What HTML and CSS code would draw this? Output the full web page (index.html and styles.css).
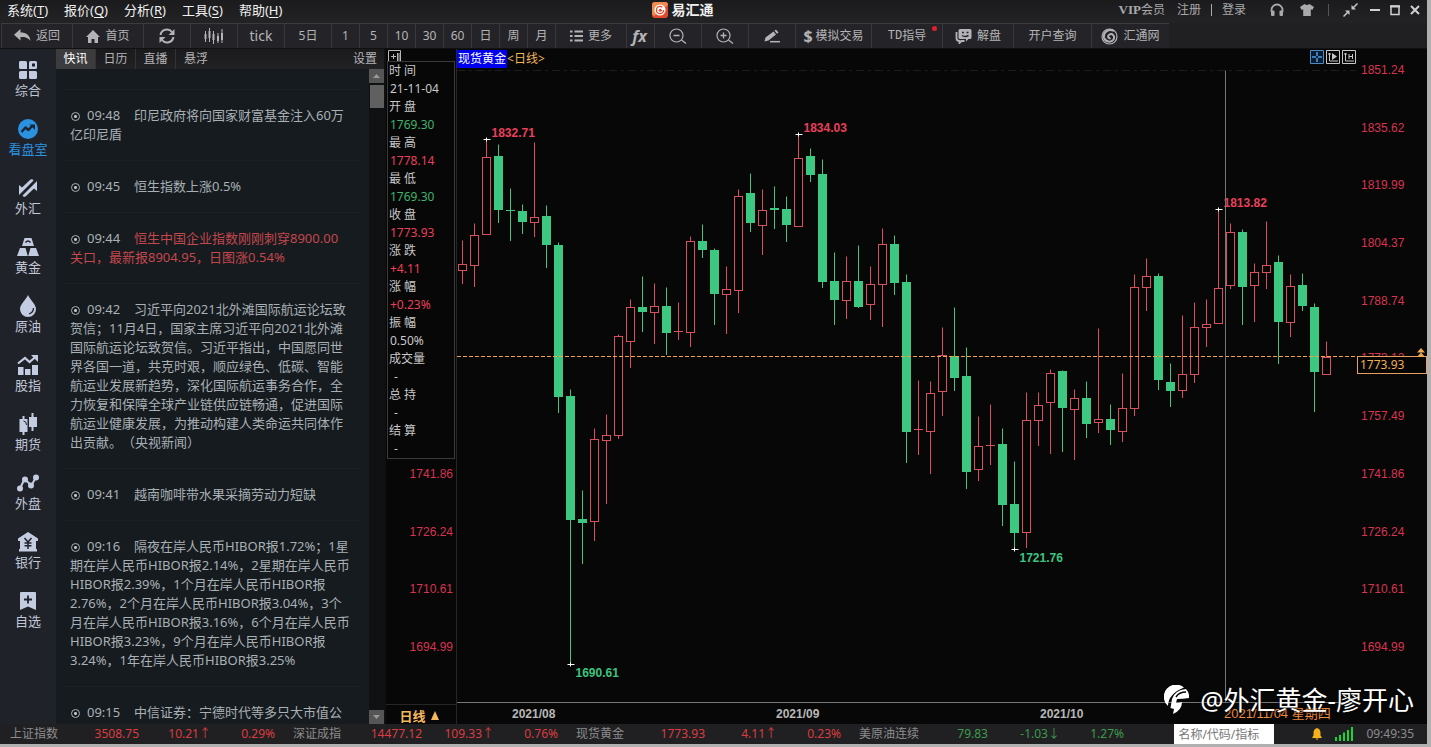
FILE: index.html
```
<!DOCTYPE html>
<html lang="zh-CN">
<head>
    <meta charset="UTF-8">
    <title>易汇通</title>
    <link rel="stylesheet" href="styles.css">
</head>
<body>
<div id="app">
    <header class="titlebar">
        <nav class="menu">
            <button>系统(<u>T</u>)</button>
            <button>报价(<u>Q</u>)</button>
            <button>分析(<u>R</u>)</button>
            <button>工具(<u>S</u>)</button>
            <button>帮助(<u>H</u>)</button>
        </nav>
        <h1 class="brand">
            <svg width="16" height="16" viewBox="0 0 16 16"><rect width="16" height="16" rx="3" fill="#e2492f"/><path d="M0 3a3 3 0 0 1 3-3h10a3 3 0 0 1 3 3L2 14a3 3 0 0 1-2-3z" fill="#f08a50"/><circle cx="8" cy="8" r="5.6" fill="#fff"/><circle cx="8" cy="8" r="3.600" fill="none" stroke="#e2492f" stroke-width="1.300" stroke-dasharray="19 3.600"/><circle cx="8.300" cy="8.300" r="1.500" fill="#e2492f"/></svg>
            易汇通
        </h1>
        <div class="user">
            <a href="#" class="vip"><b>VIP</b>会员</a>
            <a href="#">注册</a>
            <span class="bar"></span>
            <a href="#">登录</a>
            <button class="ico headset" aria-label="客服"><svg width="14" height="14" viewBox="0 0 14 14"><path d="M1.500 9V7a5.500 5.500 0 0 1 11 0v2" fill="none" stroke="#a9a9ab" stroke-width="1.800"/><rect x="1" y="7.500" width="3.500" height="5.500" rx="1" fill="#a9a9ab"/><rect x="9.500" y="7.500" width="3.500" height="5.500" rx="1" fill="#a9a9ab"/></svg></button>
            <button class="ico shirt" aria-label="换肤"><svg width="14" height="14" viewBox="0 0 14 14"><path d="M4.500 1Q7 3 9.500 1L14 4 12.300 7 10.800 6.300V13H3.200V6.300L1.700 7 0 4z" fill="#a9a9ab"/></svg></button>
            <span class="bar thin"></span>
            <button class="ico shrink" aria-label="精简"><svg width="15" height="14" viewBox="0 0 15 14"><path d="M14.500 0.500 10 5M0.500 13.500 5 9" stroke="#c4c4c4" stroke-width="1.500"/><path d="M8.500 2v4.500H13zM6.500 12V7.500H2z" fill="#c4c4c4"/></svg></button>
            <button class="ico" aria-label="最小化"><svg width="10" height="12" viewBox="0 0 10 12"><path d="M0 6h10" stroke="#d0d0d0" stroke-width="2"/></svg></button>
            <button class="ico" aria-label="最大化"><svg width="10" height="12" viewBox="0 0 10 12"><path d="M1 2v8.500h8V2z" fill="none" stroke="#d0d0d0" stroke-width="1.500"/><path d="M0 2.500h10" stroke="#d0d0d0" stroke-width="2"/></svg></button>
            <button class="ico" aria-label="关闭"><svg width="10" height="12" viewBox="0 0 10 12"><path d="M1 2l8 8M9 2l-8 8" stroke="#d0d0d0" stroke-width="2"/></svg></button>
        </div>
    </header>

    <div class="toolbar">
        <button class="w71"><svg width="17" height="14" viewBox="0 0 17 14"><path d="M6.500 0v3.500C12 3.500 16 6 16.500 12 14 8.500 11 8 6.500 8v3.500L0 5.800z" fill="#b4b4b6"/></svg>返回</button>
        <button class="w71"><svg width="14" height="13" viewBox="0 0 14 13"><path d="M7 0 14 7h-2v6H8.500V9h-3v4H2V7H0z" fill="#b4b4b6"/></svg>首页</button>
        <button class="w47" aria-label="刷新"><svg width="18" height="16" viewBox="0 0 18 16"><path d="M2.500 7A6.500 6.500 0 0 1 14 4M15.500 9A6.500 6.500 0 0 1 4 12" fill="none" stroke="#b4b4b6" stroke-width="2"/><path d="M16.500 1v6h-6zM1.500 15V9h6z" fill="#b4b4b6"/></svg></button>
        <button class="w47" aria-label="K线"><svg width="20" height="16" viewBox="0 0 20 16"><path d="M1.500 3v11M5.500 0v14M9.500 3v13M14 5v10M18 1v14" stroke="#b4b4b6"/><path d="M0.500 6h2v5h-2zM4.500 3h2v7h-2zM8.500 6h2v6h-2zM13 8h2v5h-2zM17 5h2v7h-2z" fill="#b4b4b6"/></svg></button>
        <button class="w47 tick">tick</button>
        <button class="w47">5日</button>
        <button class="w28">1</button>
        <button class="w28">5</button>
        <button class="w28">10</button>
        <button class="w28">30</button>
        <button class="w28">60</button>
        <button class="w28">日</button>
        <button class="w28">周</button>
        <button class="w28">月</button>
        <button class="w71"><svg width="13" height="12" viewBox="0 0 13 12"><path d="M0 1.500h2.500M0 6h2.500M0 10.500h2.500M4.500 1.500H13M4.500 6H13M4.500 10.500H13" stroke="#b4b4b6" stroke-width="2"/></svg>更多</button>
        <button class="w28 fx">fx</button>
        <button class="w47" aria-label="缩小"><svg width="18" height="16" viewBox="0 0 18 16"><circle cx="7.500" cy="7.500" r="6.500" fill="none" stroke="#b4b4b6" stroke-width="1.200"/><path d="M4.500 7.500h6M12.500 12l4.500 3.500" stroke="#b4b4b6" stroke-width="1.300"/></svg></button>
        <button class="w47" aria-label="放大"><svg width="18" height="16" viewBox="0 0 18 16"><circle cx="7.500" cy="7.500" r="6.500" fill="none" stroke="#b4b4b6" stroke-width="1.200"/><path d="M4.500 7.500h6M7.500 4.500v6M12.500 12l4.500 3.500" stroke="#b4b4b6" stroke-width="1.300"/></svg></button>
        <button class="w47" aria-label="画线"><svg width="16" height="14" viewBox="0 0 16 14"><path d="M0.500 12.500 1.500 8.500 9.500 2.500 12 5.500 4.500 11.500zM10.500 1.700 12 .5 14.500 3.500 13 4.700z" fill="#b4b4b6"/><path d="M6 12.700h10" stroke="#b4b4b6" stroke-width="1.500"/></svg></button>
        <button class="w76"><b class="dollar">$</b>模拟交易</button>
        <button class="w71 td"><span class="mono">TD</span>指导<i class="dot"></i></button>
        <button class="w71"><svg width="17" height="16" viewBox="0 0 17 16"><path d="M5 1h10a1.500 1.500 0 0 1 1.500 1.500v7A1.500 1.500 0 0 1 15 11h-1.500l-2.500 2.500V11H5a1.500 1.500 0 0 1-1.500-1.500v-7A1.500 1.500 0 0 1 5 1z" fill="#b4b4b6"/><path d="M1.500 4v6q0 3 3 3v2l2-2h3" fill="none" stroke="#b4b4b6" stroke-width="1.800"/><path d="M7 4.500h2M11.500 4.500h2M7 7.500q3 2 6.500 0" fill="none" stroke="#242428" stroke-width="1.500"/></svg>解盘</button>
        <button class="w78">开户查询</button>
        <button class="w78"><svg width="17" height="17" viewBox="0 0 17 17"><circle cx="8.500" cy="8.500" r="7.500" fill="none" stroke="#b4b4b6" stroke-width="1.200"/><path d="M13 3C8 0 2 4 3 9.500 4 14 10 15 12.500 11.500 14.500 8 11 5 8.500 6.500 6 8 7.500 11 9.500 10" fill="none" stroke="#b4b4b6" stroke-width="2"/></svg>汇通网</button>
    </div>

    <main class="workspace">
        <nav class="side">
            <a href="#"><svg width="20" height="20" viewBox="0 0 20 20"><path d="M2 1h5.500q1.500 0 1.500 1.500V9H2.500Q1 9 1 7.500V2.500Q1 1 2 1zM11 2.500Q11 1 12.500 1h5Q19 1 19 2.500v5Q19 9 17.500 9H11zM1 12.500Q1 11 2.500 11H9v6.500Q9 19 7.500 19h-5Q1 19 1 17.500zM11 11h6.500q1.500 0 1.500 1.500v5q0 1.500-1.500 1.500h-5Q11 19 11 17.500z" fill="#c3cce0"/><path d="M14 3.500h3v3h-3z" fill="#20222b"/></svg>综合</a>
            <a href="#" class="on"><svg width="20" height="20" viewBox="0 0 20 20"><circle cx="10" cy="10" r="10" fill="#2a92e0"/><path d="M3.500 13 7.500 8.500l3 2.500L14 7" fill="none" stroke="#1b2534" stroke-width="2.400" stroke-linejoin="round"/><path d="M11.500 5.500H17V11z" fill="#1b2534"/></svg>看盘室</a>
            <a href="#"><svg width="20" height="20" viewBox="0 0 20 20"><path d="M1 7l3 2.500L12.500 1.500q2-1 3 1L1 17zM19 3v10l-3-2.500L7.500 18.500q-2 1-3-1z" fill="#c3cce0"/></svg>外汇</a>
            <a href="#"><svg width="22" height="20" viewBox="0 0 22 20"><path d="M7.500 1h7L17 9H5zM3 11h5.500l2.300 8H0zM13.500 11H19l3 8H11.200z" fill="#c3cce0"/><path d="M8.500 5.500q2.500-3 5 0" fill="none" stroke="#20222b" stroke-width="1.500"/></svg>黄金</a>
            <a href="#"><svg width="18" height="22" viewBox="0 0 18 22"><path d="M9 0C11 5 17 9 17 14A8 8 0 0 1 1 14C1 9 7 5 9 0z" fill="#c3cce0"/><path d="M14.500 13q0 4.500-4.500 6" fill="none" stroke="#20222b" stroke-width="1.300"/></svg>原油</a>
            <a href="#"><svg width="22" height="22" viewBox="0 0 22 22"><path d="M1 9.500 8 4l4.500 4L19 2.500" fill="none" stroke="#c3cce0" stroke-width="2.200"/><path d="M14 1h7v7zM1 13h5.500v8H1zM8 15h5.500v6H8zM15 11h6v10h-6z" fill="#c3cce0"/></svg>股指</a>
            <a href="#"><svg width="20" height="22" viewBox="0 0 20 22"><path d="M5.500 3v19M14.500 0v18" stroke="#c3cce0" stroke-width="2"/><path d="M1.500 6h8v13h-8zM11 4h8v10h-8z" fill="#c3cce0"/><path d="M5.500 8q3 0 3 4" fill="none" stroke="#20222b"/></svg>期货</a>
            <a href="#"><svg width="22" height="18" viewBox="0 0 22 18"><path d="M3 14.500 7.500 5l7 6.500L19 3" fill="none" stroke="#c3cce0" stroke-width="2"/><circle cx="3" cy="14.500" r="3" fill="#c3cce0"/><circle cx="8" cy="5.500" r="3" fill="#c3cce0"/><circle cx="14" cy="11.500" r="3" fill="#c3cce0"/><circle cx="19" cy="3.500" r="3" fill="#c3cce0"/></svg>外盘</a>
            <a href="#"><svg width="20" height="20" viewBox="0 0 20 20"><path d="M10 0 20 6.500V9h-2v8h1v2.500H1V17h1V9H0V6.500z" fill="#c3cce0"/><path d="M6.500 6 10 10l3.500-4M10 10v7M6.500 11h7M6.500 13.800h7" fill="none" stroke="#20222b" stroke-width="1.500"/></svg>银行</a>
            <a href="#"><svg width="18" height="20" viewBox="0 0 18 20"><path d="M1 2q0-1 1-1h14q1 0 1 1v17l-8-3.500L1 19z" fill="#c3cce0"/><path d="M9 4.500v8M5 8.500h8" stroke="#20222b" stroke-width="1.800"/></svg>自选</a>
        </nav>

        <section class="news">
            <div class="tabs">
                <button class="on">快讯</button>
                <button>日历</button>
                <button>直播</button>
                <button>悬浮</button>
                <button class="set">设置</button>
            </div>
            <div class="feed">
                <div class="list">
                    <p><i></i><time>09:48</time>印尼政府将向国家财富基金注入60万<br>亿印尼盾</p>
                    <p><i></i><time>09:45</time>恒生指数上涨0.5%</p>
                    <p class="hot"><i></i><time>09:44</time>恒生中国企业指数刚刚刺穿8900.00<br>关口，最新报8904.95，日图涨0.54%</p>
                    <p><i></i><time>09:42</time>习近平向2021北外滩国际航运论坛致<br>贺信；11月4日，国家主席习近平向2021北外滩<br>国际航运论坛致贺信。习近平指出，中国愿同世<br>界各国一道，共克时艰，顺应绿色、低碳、智能<br>航运业发展新趋势，深化国际航运事务合作，全<br>力恢复和保障全球产业链供应链畅通，促进国际<br>航运业健康发展，为推动构建人类命运共同体作<br>出贡献。（央视新闻）</p>
                    <p><i></i><time>09:41</time>越南咖啡带水果采摘劳动力短缺</p>
                    <p><i></i><time>09:16</time>隔夜在岸人民币HIBOR报1.72%；1星<br>期在岸人民币HIBOR报2.14%，2星期在岸人民币<br>HIBOR报2.39%，1个月在岸人民币HIBOR报<br>2.76%，2个月在岸人民币HIBOR报3.04%，3个<br>月在岸人民币HIBOR报3.16%，6个月在岸人民币<br>HIBOR报3.23%，9个月在岸人民币HIBOR报<br>3.24%，1年在岸人民币HIBOR报3.25%</p>
                    <p><i></i><time>09:15</time>中信证券：宁德时代等多只大市值公</p>
                </div>
                <div class="scroll">
                    <button aria-label="向上"><svg width="7" height="4"><path d="M0 4 3.500 0 7 4z" fill="#999"/></svg></button>
                    <span class="thumb"></span>
                    <button aria-label="向下"><svg width="7" height="4"><path d="M0 0h7L3.500 4z" fill="#999"/></svg></button>
                </div>
            </div>
        </section>

        <section class="quote">
            <button class="fold" aria-label="收起"><svg width="13" height="12" viewBox="0 0 13 12"><path d="M.5 12V.5h12V12M9.500 3v8M11 3v8M3 6.500h5M5.500 4v5" fill="none" stroke="#b8b8b8"/></svg></button>
            <dl class="info">
                <dt>时 间</dt><dd>21-11-04</dd>
                <dt>开 盘</dt><dd class="down">1769.30</dd>
                <dt>最 高</dt><dd class="up">1778.14</dd>
                <dt>最 低</dt><dd class="down">1769.30</dd>
                <dt>收 盘</dt><dd class="up">1773.93</dd>
                <dt>涨 跌</dt><dd class="up">+4.11</dd>
                <dt>涨 幅</dt><dd class="up">+0.23%</dd>
                <dt>振 幅</dt><dd>0.50%</dd>
                <dt>成交量</dt><dd class="none">-</dd>
                <dt>总 持</dt><dd class="none">-</dd>
                <dt>结 算</dt><dd class="none">-</dd>
            </dl>
            <div class="axis left">
                <span>1741.86</span><span>1726.24</span><span>1710.61</span><span>1694.99</span>
            </div>
            <button class="period">日线 <svg width="8" height="9"><path d="M0 9 4 0l4 9z" fill="#f5b95c"/></svg></button>
        </section>

        <section class="chart">
            <svg id="plot"></svg>
            <div class="caption"><mark>现货黄金</mark>&lt;日线&gt;</div>
            <div class="tools">
                <button aria-label="十字光标"><svg width="14" height="14" viewBox="0 0 14 14"><path d="M.5.500h13v13H.5z" fill="#0c1c30" stroke="#4a8cc4"/><path d="M7 2v4M7 8v4M2 7h4M8 7h4" stroke="#4aa0e8" stroke-width="1.500"/></svg></button>
                <button aria-label="回放"><svg width="14" height="14" viewBox="0 0 14 14"><path d="M.5.500h13v13H.5zM3.500 3v8H12M2 4h3" fill="none" stroke="#c8c8c8"/><path d="M6 3v7l5-3.500z" fill="#c8c8c8"/></svg></button>
                <button aria-label="高低"><svg width="14" height="14" viewBox="0 0 14 14"><path d="M.5.500h13v13H.5zM3.500 3v8H12M2 4h3M7 4v5M10.500 4v5M7 6.500h3" fill="none" stroke="#c8c8c8"/></svg></button>
            </div>
            <div class="dates">
                <span>2021/08</span><span>2021/09</span><span>2021/10</span><time>2021/11/04 星期四</time>
            </div>
            <div class="watermark">
                <svg width="26" height="30" viewBox="0 0 26 30"><path d="M20 2.500A12 12 0 0 0 4 21Q4 9 20 2.500zM25 10A12 12 0 0 0 22 4Q11 5 8 14L6.500 23 10 24 9 29Q18 25 18 17q-3 1-6 1l1-4q6 0 12-1z" fill="#fff"/><path d="M12 12q3-5 10-5" fill="none" stroke="#070707" stroke-width="1.500"/></svg>
                @外汇黄金-廖开心
            </div>
        </section>

        <section class="prices">
            <div class="axis">
                <span>1851.24</span><span>1835.62</span><span>1819.99</span><span>1804.37</span><span>1788.74</span><span>1773.12</span><span>1757.49</span><span>1741.86</span><span>1726.24</span><span>1710.61</span><span>1694.99</span>
            </div>
            <div class="last">1773.93</div>
            <svg class="lastmark" width="8" height="9" viewBox="0 0 8 9"><path d="M0 4.500 4 0l4 4.500zM0 9l4-4.500L8 9z" fill="#f0a848"/></svg>
        </section>
    </main>

    <footer class="status">
        <div class="idx"><span>上证指数</span><b>3508.75</b><b>10.21↑</b><b>0.29%</b></div>
        <div class="idx"><span>深证成指</span><b>14477.12</b><b>109.33↑</b><b>0.76%</b></div>
        <div class="idx"><span>现货黄金</span><b>1773.93</b><b>4.11↑</b><b>0.23%</b></div>
        <div class="idx fall"><span>美原油连续</span><b>79.83</b><b>-1.03↓</b><b>1.27%</b></div>
        <div class="tray">
            <input type="text" placeholder="名称/代码/指标" aria-label="名称/代码/指标">
            <svg width="10" height="12" viewBox="0 0 10 12"><path d="M5 0q3.500 1 3.500 5v2.500L10 10H0l1.500-2.500V5Q1.500 1 5 0zM3.500 10.500h3L5 12z" fill="#f5b21a"/></svg>
            <svg width="18" height="14" viewBox="0 0 18 14"><path d="M1 10v4M5 8v6M9 5.500V14M13 3v11M17 0v14" stroke="#19d43a" stroke-width="2"/></svg>
            <time>09:49:35</time>
        </div>
    </footer>
</div>
<script>
    var plot=document.getElementById("plot");
    //画布基准尺寸，窗口变化时按比例缩放
    var baseW=899,baseH=652;
    //最高,实体上,实体下,最低,1涨0跌
    var bars=[
        [190,214,220,233,1],[173,185,215,236,1],[89,107,184,184,1],[94,106,160,172,0],[138,160,161,190,0],
        [154,161,172,183,0],[92,167,172,186,1],[155,166,195,217,0],[192,195,347,362,0],[339,346,470,614,0],
        [440,469,473,513,0],[378,389,471,490,1],[364,385,390,453,1],[284,286,385,388,1],[249,257,291,317,1],
        [226,257,262,281,0],[233,256,262,293,1],[237,256,283,304,0],[252,281,282,289,1],[186,191,282,296,1],
        [174,191,200,207,0],[198,200,244,274,0],[216,239,244,283,1],[139,146,240,262,1],[123,143,173,181,0],
        [139,160,175,204,1],[136,158,160,178,0],[146,159,175,191,0],[84,108,176,176,1],[98,106,125,131,0],
        [109,124,232,237,0],[202,231,250,274,0],[206,231,250,268,1],[195,231,257,257,0],[216,234,254,269,1],
        [178,194,234,276,1],[185,194,233,244,0],[224,232,382,412,0],[330,379,380,404,1],[331,343,381,423,1],
        [277,305,341,365,1],[257,306,328,340,0],[297,326,422,438,0],[366,396,419,430,1],[354,395,395,414,1],
        [378,394,455,475,0],[411,454,483,499,0],[342,370,482,497,1],[342,355,370,395,1],[319,323,352,403,1],
        [320,321,358,401,0],[339,348,359,409,1],[331,348,374,387,0],[278,369,372,382,1],[354,369,380,394,0],
        [323,358,381,391,1],[224,237,358,365,1],[208,226,237,260,1],[223,226,330,339,0],[313,332,341,356,0],
        [265,324,340,347,1],[252,277,324,332,1],[249,274,277,296,1],[159,238,273,273,1],[173,182,235,238,1],
        [179,182,237,274,0],[213,222,235,271,1],[171,215,222,238,1],[205,212,272,313,0],[224,236,272,286,1],
        [223,235,256,260,0],[253,257,322,361,0],[291,307,324,324,1]
    ];
    //极值标注: 第几根,价位y,文字,文字偏移,颜色
    var marks=[
        [2,89,"1832.71",-3,"#e8405a"],[28,84,"1834.03",-3,"#e8405a"],[63,159,"1813.82",-3,"#e8405a"],
        [9,614,"1690.61",12,"#3cc480"],[46,499,"1721.76",12,"#3cc480"]
    ];
    function line(x1,y1,x2,y2,color,dash) {
        return '<line x1="'+x1+'" y1="'+y1+'" x2="'+x2+'" y2="'+y2+'" stroke="'+color+'"'+(dash?' stroke-dasharray="'+dash+'"':'')+'/>';
    }
    function draw() {
        var w=plot.clientWidth,h=plot.clientHeight;
        var kx=w/baseW,ky=h/baseH;
        function px(i) { return Math.round((5+12*i)*kx)+0.5; }
        function py(v) { return Math.round(v*ky)+0.5; }
        var s=line(0,py(20),w,py(20),"#1c1c1c","8 4 3 4");
        for (var i=0;i<bars.length;i++){
            var b=bars[i],x=px(i),color=b[4]?"#d8505c":"#3cc880";
            s+=line(x,py(b[0]),x,py(b[3])+0.5,color);
            if (b[2]-b[1]<2){
                s+=line(x-4.5,py(b[1]),x+4.5,py(b[1]),color);
            } else if (b[4]){
                s+='<rect x="'+(x-4)+'" y="'+py(b[1])+'" width="8" height="'+(py(b[2])-py(b[1]))+'" fill="#050505" stroke="'+color+'"/>';
            } else{
                s+='<rect x="'+(x-4.5)+'" y="'+(py(b[1])-0.5)+'" width="9" height="'+(py(b[2])-py(b[1]))+'" fill="'+color+'"/>';
            }
        }
        s+=line(0,py(306),w,py(306),"#f0a444","4 2");
        for (var j=0;j<marks.length;j++){
            var m=marks[j],mx=px(m[0]),my=py(m[1]);
            s+=line(mx-3,my,mx+4,my,"#fff")+line(mx,my-2,mx,my+2,"#fff");
            s+='<text x="'+(mx+5)+'" y="'+(my+m[3])+'" fill="'+m[4]+'">'+m[2]+'</text>';
        }
        var cx=Math.round(768*kx)+0.5;
        s+=line(cx,py(20),cx,h,"#777");
        plot.innerHTML=s;
    }
    draw();
    window.onresize=draw;
</script>
</body>
</html>
```
FILE: styles.css
```
*{box-sizing:border-box;}
body{
    margin:0;
    background:#b0b0b0;
    font:12px/18px "Noto Sans","Noto Sans CJK SC",sans-serif;
    color:#b4b4b6;
}
button{
    border:0;
    padding:0;
    background:none;
    font:inherit;
    color:inherit;
    white-space:nowrap;
}
a{color:inherit;text-decoration:none;}
h1,p,dl,dd{margin:0;}
svg{display:block;flex:none;}
#app{
    display:flex;
    flex-direction:column;
    height:100vh;
    border:solid #b0b0b0;
    border-width:0 4px 3px 0;
    background:#070707;
    overflow:hidden;
}

/* 标题栏 */
.titlebar{
    display:grid;
    grid-template-columns:1fr auto 1fr;
    align-items:center;
    height:23px;
    flex:none;
    padding-bottom:3px;
    background:linear-gradient(#1b1b1d,#232325);
}
.menu{display:flex;gap:16px;padding-left:7px;font-size:13px;color:#f0f0f0;}
.menu u{text-underline-offset:2px;}
.brand{
    display:flex;
    align-items:center;
    gap:4px;
    margin-left:-62px;
    font-size:14px;
    line-height:20px;
    color:#f0f0f0;
}
.user{display:flex;align-items:center;justify-content:flex-end;gap:10px;padding-right:7px;color:#a9a9ab;}
.vip{margin-right:2px;}
.vip b{font:bold 13px/18px "Liberation Serif",serif;}
.bar{width:1px;height:12px;background:#a9a9ab;}
.bar.thin{background:#555;margin-left:4px;}
.headset{margin:0 6px 0 14px;}
.shrink{margin-right:2px;margin-left:4px;}

/* 工具栏 */
.toolbar{
    display:flex;
    height:26px;
    flex:none;
    padding-left:1px;
    background:#202023;
    border-bottom:1px solid #111;
}
.toolbar button{
    display:flex;
    align-items:center;
    justify-content:center;
    gap:5px;
    flex:none;
    background:#242428;
    border-top:1px solid #3c3c3f;
    border-left:1px solid #39393c;
}
.w28{width:28px;}
.w47{width:47px;}
.w71{width:71px;}
.w76{width:76px;}
.w78{width:78px;}
.toolbar .tick{font-size:14px;}
.toolbar .fx{padding-right:2px;font:italic bold 16px/18px "Noto Sans",sans-serif;}
.toolbar .w76{gap:3px;}
.dollar{font-size:16px;}
.mono{font-family:"Liberation Mono",monospace;margin-right:-5px;}
.td{position:relative;}
.dot{position:absolute;top:2px;right:5px;width:5px;height:5px;border-radius:50%;background:#e0202c;}

/* 主区域 */
.workspace{display:flex;flex:1;min-height:0;}
.side{
    width:56px;
    flex:none;
    padding-top:10px;
    background:#20222a;
    font-size:13px;
    color:#c0c8d8;
}
.side a{
    display:flex;
    flex-direction:column;
    align-items:center;
    justify-content:space-between;
    height:40px;
    margin-bottom:19px;
    line-height:18px;
}
.side svg{height:22px;}
.side .on{color:#2a92e0;}
.news{
    display:flex;
    flex-direction:column;
    width:330px;
    flex:none;
    border-right:2px solid #101010;
    background:#161b20;
}
.tabs{display:flex;height:20px;flex:none;background:linear-gradient(#1a1a1c,#222225);}
.tabs button{width:40px;border-right:1px solid #333;}
.tabs .on{background:#3c3c3e;color:#fff;}
.tabs button:nth-child(4),.tabs .set{border:0;}
.tabs .set{width:38px;margin-left:auto;}
.feed{display:flex;flex:1;min-height:0;}
.list{
    flex:1;
    padding:20px 10px 0 8px;
    overflow:hidden;
    font-size:13px;
    line-height:19px;
    color:#a8b0b4;
    text-spacing-trim:space-all;
}
.list p{padding:16px 0 16px 6px;border-top:1px solid #1b2126;white-space:nowrap;}
.list i{
    display:inline-block;
    width:9px;
    height:9px;
    margin:0 7px 0 1px;
    vertical-align:-1px;
    border:1px solid #a8b0b4;
    border-radius:50%;
    background:radial-gradient(#c0c6ca 0 1px,transparent 2px);
}
.list time{display:inline-block;width:47px;}
.hot{color:#c4474c;}
.hot time{color:#a8b0b4;}
.scroll{display:flex;flex-direction:column;width:15px;background:#101112;}
.scroll button{display:flex;align-items:center;justify-content:center;height:14px;background:#555;}
.thumb{height:23px;margin:2px 0 auto 1px;background:#606060;}

/* 行情数据 */
.quote{
    display:flex;
    flex-direction:column;
    width:71px;
    flex:none;
    border-right:1px solid #262626;
}
.fold{margin:1px 0 0 2px;height:11px;overflow:hidden;text-align:left;}
.info{margin:0 1px;border:1px solid #3a3a3a;color:#c8c8c8;}
.info dt,.info dd{height:18px;line-height:18px;padding-left:1px;white-space:nowrap;}
.info dt{line-height:17px;}
.info dd{padding-left:2px;}
.info .none{padding-left:6px;}
.info .up{color:#e8405a;}
.info .down{color:#3cb46c;}
.axis{
    display:flex;
    flex-direction:column;
    justify-content:space-between;
    font-family:"Liberation Sans",sans-serif;
    color:#d83450;
}
.left{flex:1;padding:6px 3px 48px 0;text-align:right;}
.period{
    display:flex;
    align-items:center;
    justify-content:center;
    gap:5px;
    height:20px;
    padding-right:4px;
    border-top:1px solid #262626;
    font-size:13px;
    font-weight:bold;
    color:#f5b95c;
}
.period{padding:2px 4px 0 0;}

/* K线图 */
.chart{position:relative;display:flex;flex-direction:column;flex:1;min-width:0;padding-top:1px;}
#plot{width:100%;flex:1;min-height:0;border-bottom:1px solid #777;font:bold 12px "Liberation Sans",sans-serif;}
.caption{position:absolute;top:1px;left:0;color:#f0b860;}
.caption mark{display:inline-block;padding:0 1px;background:#0000f0;color:#fff;}
.tools{position:absolute;top:1px;right:0;display:flex;gap:2px;}
.dates{
    display:grid;
    grid-template-columns:264fr 264fr 184fr 132fr;
    height:21px;
    flex:none;
    padding-left:55px;
    font:bold 12px/22px "Liberation Sans",sans-serif;
    color:#b8b8b8;
}
.dates time{
    font:13px/22px "Liberation Sans","Noto Sans CJK SC",sans-serif;
    color:#f08c3c;
    white-space:nowrap;
}
.watermark{
    position:absolute;
    right:-58px;
    bottom:6px;
    z-index:2;
    display:flex;
    align-items:center;
    gap:10px;
    font-size:26px;
    line-height:36px;
    color:#fff;
    white-space:nowrap;
    text-shadow:0 1px 3px #000;
}
.prices{position:relative;width:71px;flex:none;}
.prices .axis{height:100%;padding:12px 0 68px 5px;}
.last{
    position:absolute;
    top:307px;
    left:1px;
    right:0;
    height:18px;
    padding-left:2px;
    border:1px solid #e8a060;
    background:#050505;
    line-height:16px;
    color:#f0b050;
}
.lastmark{position:absolute;top:299px;right:2px;}

/* 底部状态栏 */
.status{
    display:flex;
    align-items:center;
    height:20px;
    flex:none;
    padding-left:10px;
    background:#202022;
    color:#8c8c8e;
}
.idx{
    display:grid;
    grid-template-columns:60px 69px 72px 64px;
    width:283px;
    flex:none;
    white-space:nowrap;
}
.idx b{font-weight:normal;text-align:right;color:#dc3c40;}
.idx.fall b{color:#3c9c4c;}
.tray{display:flex;align-items:center;justify-content:flex-end;flex:1;gap:13px;padding-right:13px;}
.tray input{
    width:100px;
    height:20px;
    margin-right:25px;
    padding:0 4px;
    border:0;
    background:#fff;
    font:inherit;
}
.tray input::placeholder{color:#777;}
```
